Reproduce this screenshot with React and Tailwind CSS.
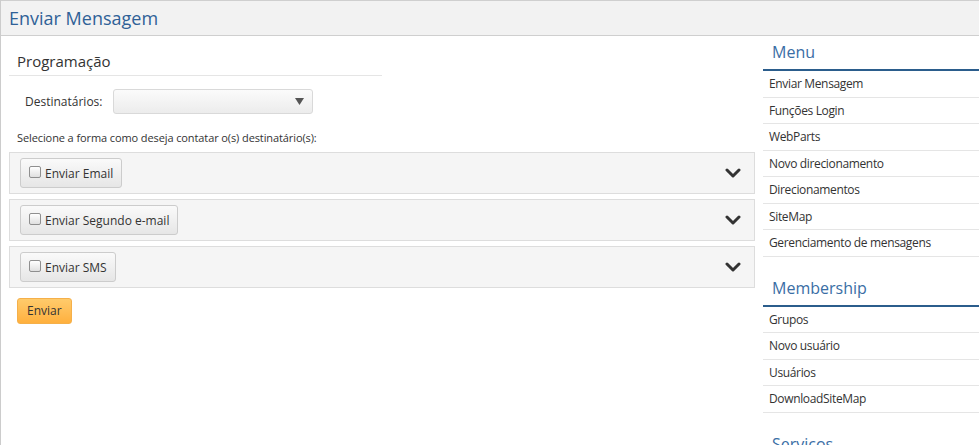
import React from "react";

const font = { fontFamily: '"Open Sans", "Noto Sans", sans-serif' };

function Chevron() {
  return (
    <svg width="16" height="10" viewBox="0 0 16 10" className="block">
      <polyline points="2,2 8,8 14,2" fill="none" stroke="#333" strokeWidth="3" strokeLinecap="round" strokeLinejoin="round" />
    </svg>
  );
}

function Panel({ label }) {
  return (
    <div className="flex items-center justify-between h-[42px] border border-[#dddddd] bg-[#f5f5f5] pl-[10px] pr-[13px]">
      <div className="flex items-center h-[30px] px-[8px] rounded-[3px] border border-[#cccccc] bg-gradient-to-b from-[#fafafa] to-[#e6e6e6] text-[12px] text-[#333] pt-[1px]">
        <span className="inline-block w-[12px] h-[12px] rounded-[2px] border border-[#8f8f8f] bg-gradient-to-b from-[#ffffff] to-[#e0e0e0] mr-[4px] -mt-[4px]" />
        <span>{label}</span>
      </div>
      <Chevron />
    </div>
  );
}

function SideHeader({ title, first }) {
  return (
    <div className={`border-b-2 border-[#2b5d8c] pl-[9px] pt-[5px] pb-[6px] text-[16px] leading-[22px] text-[#3a6ea5] ${first ? "" : "mt-[15px]"}`}>
      {title}
    </div>
  );
}

function SideItem({ label }) {
  return (
    <div className="h-[26.5px] flex items-center border-b border-[#e5e5e5] pl-[6px] pt-[1px] text-[12px] tracking-[-0.35px] text-[#333]">
      {label}
    </div>
  );
}

export default function App() {
  return (
    <div style={font} className="w-[979px] h-[445px] overflow-hidden bg-white border-l border-[#cccccc]">
      <div className="h-[36px] bg-[#f2f2f2] border-t border-b border-[#cfcfcf] flex items-center pl-[8px] text-[18px] text-[#2f6197]">
        Enviar Mensagem
      </div>
      <div className="flex">
        <div className="flex-1 pl-[8px] pr-[8px] pt-[14px]">
          <div className="w-[373px] border-b border-[#e5e5e5] pl-[8px] pb-[3px] text-[15px] leading-[22px] text-[#333]">
            Programação
          </div>
          <div className="flex items-center mt-[13px] pl-[16px]">
            <span className="text-[12px] text-[#333] w-[88px]">Destinatários:</span>
            <div className="w-[200px] h-[25px] rounded-[3px] border border-[#d9d9d9] bg-gradient-to-b from-[#fbfbfb] to-[#ececec] flex items-center justify-end pr-[8px]">
              <svg width="9" height="7" viewBox="0 0 9 7"><polygon points="0,0 9,0 4.5,7" fill="#555" /></svg>
            </div>
          </div>
          <div className="mt-[16px] pl-[8px] text-[11px] leading-[16px] tracking-[-0.1px] text-[#333]">
            Selecione a forma como deseja contatar o(s) destinatário(s):
          </div>
          <div className="mt-[6px] flex flex-col gap-[5px]">
            <Panel label="Enviar Email" />
            <Panel label="Enviar Segundo e-mail" />
            <Panel label="Enviar SMS" />
          </div>
          <div className="mt-[9px] ml-[8px]">
            <button className="h-[26px] px-[9px] rounded-[3px] border border-[#f5b04a] bg-gradient-to-b from-[#ffcb6b] to-[#ffb03d] text-[12px] text-[#333]">
              Enviar
            </button>
          </div>
        </div>
        <div className="w-[216px] shrink-0">
          <SideHeader title="Menu" first />
          <SideItem label="Enviar Mensagem" />
          <SideItem label="Funções Login" />
          <SideItem label="WebParts" />
          <SideItem label="Novo direcionamento" />
          <SideItem label="Direcionamentos" />
          <SideItem label="SiteMap" />
          <SideItem label="Gerenciamento de mensagens" />
          <SideHeader title="Membership" />
          <SideItem label="Grupos" />
          <SideItem label="Novo usuário" />
          <SideItem label="Usuários" />
          <SideItem label="DownloadSiteMap" />
          <SideHeader title="Serviços" />
        </div>
      </div>
    </div>
  );
}
